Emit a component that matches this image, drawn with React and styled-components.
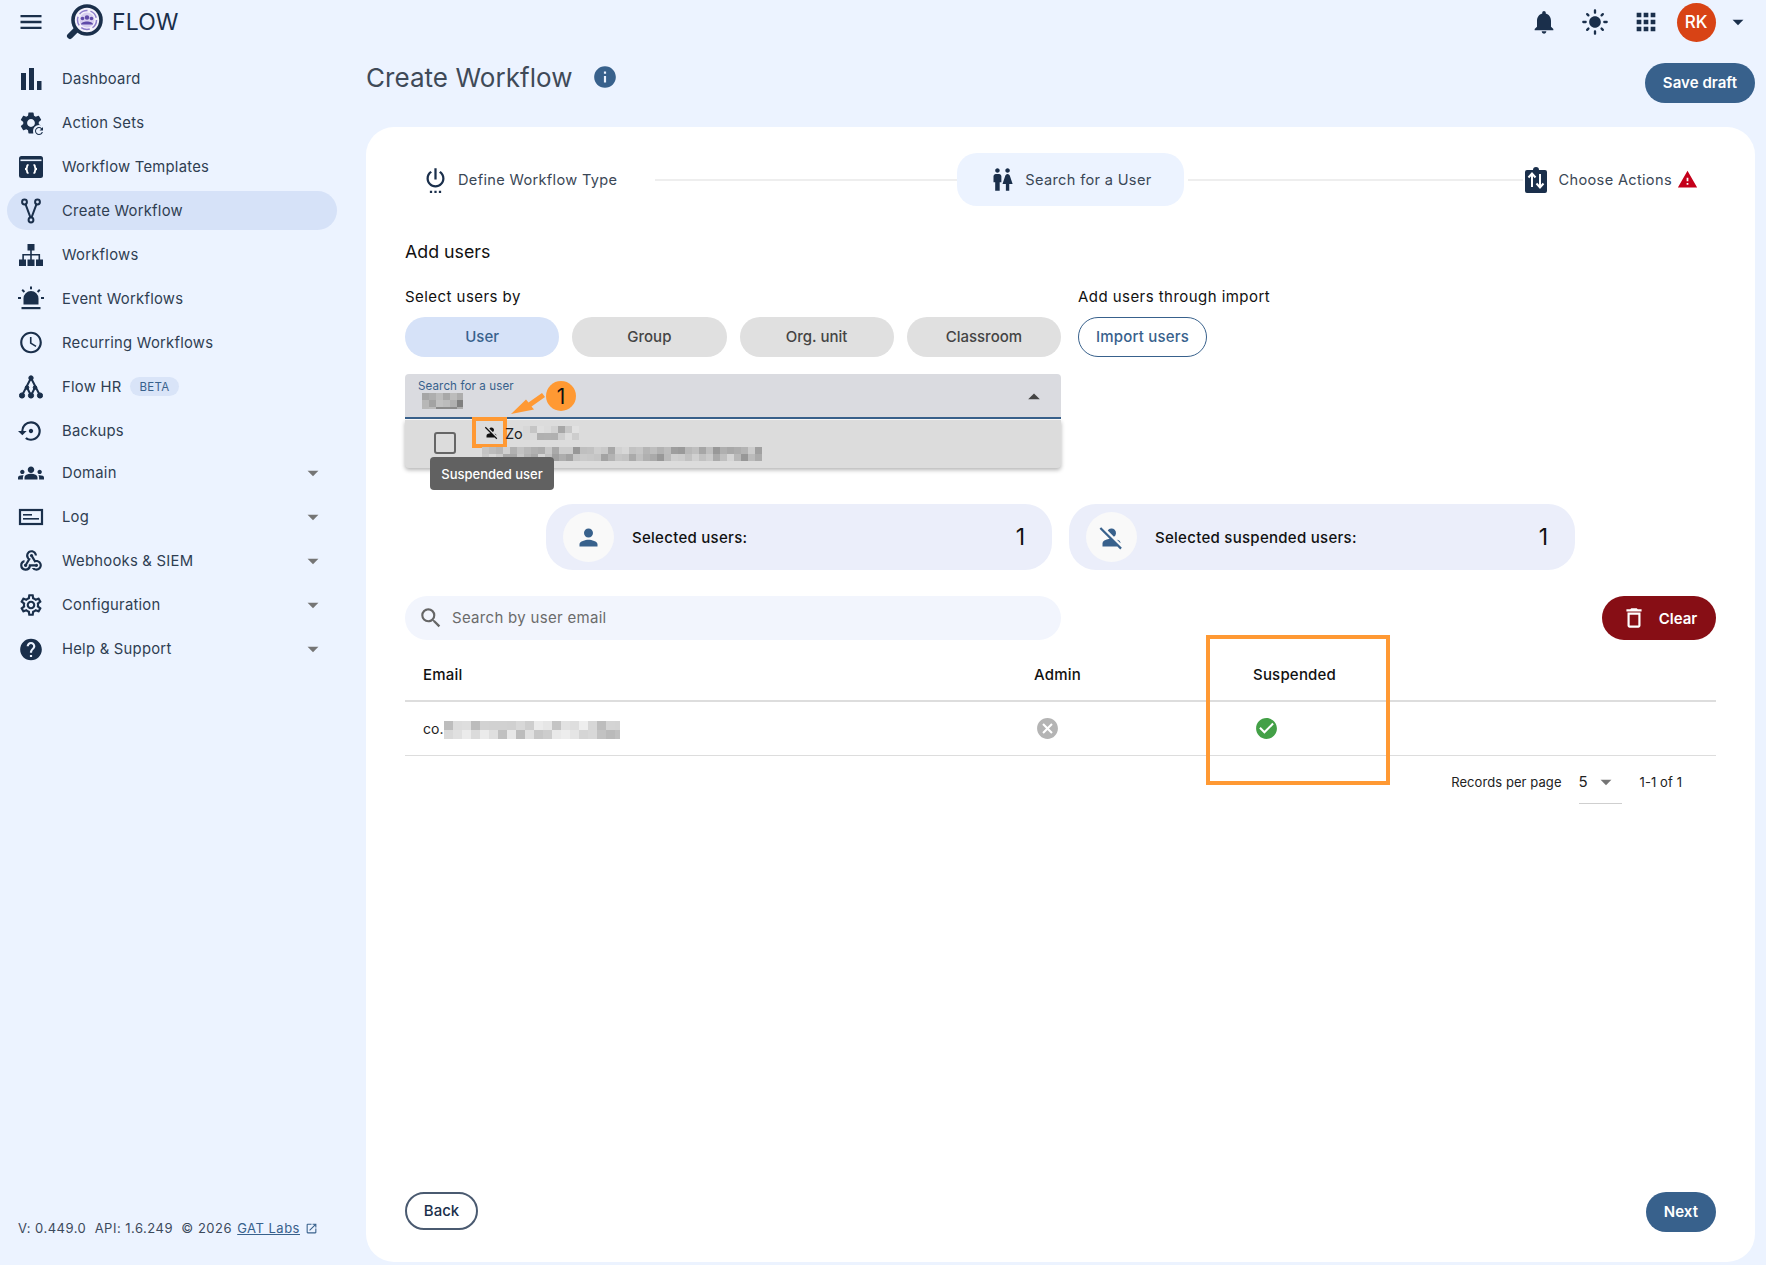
import styled, { createGlobalStyle } from "styled-components";
import {
  MdMenu, MdSettings, MdRefresh, MdOutlineAccessTime, MdSettingsBackupRestore,
  MdGroups, MdOutlineWebhook, MdOutlineSettings, MdHelp, MdArrowDropDown,
  MdArrowDropUp, MdOpenInNew, MdNotifications, MdLightMode, MdApps, MdInfo, MdSettingsPower,
  MdWc, MdWarning, MdPerson, MdPersonOff, MdSearch, MdDeleteOutline, MdCancel, MdCheckCircle,
} from "react-icons/md";

const NAVY = "#1a2f4b";
const BLUE = "#38618c";

const GlobalStyle = createGlobalStyle`
  html, body { margin: 0; padding: 0; }
  body {
    background: #ecf3ff;
    font-family: "Inter", "Liberation Sans", sans-serif;
    color: #2f3e52;
  }
  * { box-sizing: border-box; }
`;

// hand drawn icons, the ones the packages don't have
const LogoIcon = () => (
  <svg width="38" height="38" viewBox="0 0 38 38">
    <line x1="10" y1="27" x2="4" y2="33" stroke={NAVY} strokeWidth="6" strokeLinecap="round" />
    <circle cx="21" cy="17" r="14" fill="#f4f2fb" stroke={NAVY} strokeWidth="3.600" />
    <circle cx="21" cy="17" r="9.500" fill="none" stroke="#8f7fcc" strokeWidth="1.500" strokeDasharray="9 3" />
    <circle cx="21" cy="17" r="7.500" fill="#d8d0f0" />
    <circle cx="21" cy="14.500" r="2.200" fill="#5f4aa8" />
    <circle cx="16.500" cy="15.500" r="1.800" fill="#5f4aa8" />
    <circle cx="25.500" cy="15.500" r="1.800" fill="#5f4aa8" />
    <path d="M15 21.500c0-4 12-4 12 0z" fill="#5f4aa8" />
  </svg>
);

const BarsIcon = () => (
  <svg width="22" height="24" viewBox="0 0 22 24" fill={NAVY}>
    <rect x="1" y="6" width="5" height="17" />
    <rect x="9" y="1" width="5" height="22" />
    <rect x="17" y="14" width="4.500" height="9" />
  </svg>
);

const TemplateIcon = () => (
  <svg width="26" height="26" viewBox="0 0 26 26">
    <rect x="1" y="2" width="24" height="22" rx="2.500" fill={NAVY} />
    <rect x="2.500" y="5.500" width="21" height="1.600" fill="#ecf3ff" />
    <path d="M10.500 11c-1.500 0-1.500 1-1.500 2s-.5 2-2 2c1.500 0 2 1 2 2s0 2 1.500 2M15.500 11c1.500 0 1.500 1 1.500 2s.5 2 2 2c-1.500 0-2 1-2 2s0 2-1.500 2" fill="none" stroke="#fff" strokeWidth="1.800" />
  </svg>
);

const ForkIcon = () => (
  <svg width="24" height="26" viewBox="0 0 24 26" fill="none" stroke={NAVY} strokeWidth="2">
    <circle cx="5.500" cy="4" r="2.400" />
    <circle cx="18.500" cy="4" r="2.400" />
    <circle cx="12" cy="22" r="2.400" />
    <path d="M6.500 6.200L11.500 19.600M17.500 6.200L12.500 19.600" />
  </svg>
);

const SitemapIcon = () => (
  <svg width="26" height="24" viewBox="0 0 26 24" fill={NAVY}>
    <rect x="9.500" y="1" width="7" height="6.500" />
    <rect x="1" y="16.500" width="7" height="6.500" />
    <rect x="9.500" y="16.500" width="7" height="6.500" />
    <rect x="18" y="16.500" width="7" height="6.500" />
    <path d="M12.200 7h1.600v4h8.300v6h-1.600v-4.400h-6.700V17h-1.600v-4.400H5.900V17H4.300v-6h7.900z" />
  </svg>
);

const SirenIcon = () => (
  <svg width="26" height="26" viewBox="0 0 26 26" fill={NAVY}>
    <path d="M5.500 18.500v-6a7.500 7.500 0 0 1 15 0v6z" />
    <rect x="3.500" y="21" width="19" height="2.200" />
    <rect x="12" y="0.500" width="2" height="2.800" />
    <path d="M3.500 4.500l1.400-1.400 2.200 2.200-1.400 1.400zM22.500 4.500l-1.400-1.400-2.200 2.200 1.400 1.400z" />
    <rect x="0" y="11" width="3" height="2" />
    <rect x="23" y="11" width="3" height="2" />
  </svg>
);

const TreeIcon = () => (
  <svg width="24" height="24" viewBox="0 0 24 24" fill={NAVY} stroke={NAVY}>
    <path d="M12 3L3 20.500M12 3l9 17.500M8 12.500l4 8M16 12.500l-4 8" fill="none" strokeWidth="2" />
    <circle cx="12" cy="3" r="2.200" />
    <circle cx="8" cy="12.500" r="1.800" />
    <circle cx="16" cy="12.500" r="1.800" />
    <circle cx="3" cy="20.500" r="2.600" />
    <circle cx="12" cy="20.500" r="2.600" />
    <circle cx="21" cy="20.500" r="2.600" />
  </svg>
);

const LogIcon = () => (
  <svg width="26" height="20" viewBox="0 0 26 20">
    <rect x="2" y="3" width="22" height="14" fill="none" stroke={NAVY} strokeWidth="2.200" />
    <rect x="5" y="7" width="9" height="1.600" fill={NAVY} />
    <rect x="5" y="11" width="16" height="1.600" fill={NAVY} />
  </svg>
);

const ActionsIcon = () => (
  <svg width="22" height="26" viewBox="0 0 22 26">
    <path d="M2 3h6a3 3 0 0 1 6 0h6a2 2 0 0 1 2 2v19a2 2 0 0 1-2 2H2a2 2 0 0 1-2-2V5a2 2 0 0 1 2-2z" fill={NAVY} />
    <path d="M7 20V7M3.500 10.500L7 6.500l3.500 4M15 7v13M11.500 16.500l3.500 4 3.500-4" fill="none" stroke="#fff" strokeWidth="2" />
  </svg>
);

// mosaic over redacted text, shades are stable per cell
const Mosaic = ({ width, height, cell = 7, dark = 170, light = 232, seed = 3 }) => {
  const cells = [];
  const cols = Math.ceil(width / cell);
  const rows = Math.ceil(height / cell);
  for (let r = 0; r < rows; r++) {
    for (let c = 0; c < cols; c++) {
      const n = Math.abs(Math.sin((c + 1) * 12.9898 + (r + seed) * 78.233) * 43758.5453) % 1;
      const v = Math.round(light - (light - dark) * n);
      cells.push(<rect key={`${r}-${c}`} x={c * cell} y={r * cell} width={cell} height={cell} fill={`rgb(${v},${v},${v})`} />);
    }
  }
  return <svg width={width} height={height} style={{ display: "block" }}>{cells}</svg>;
};

const NAV = [
  { label: "Dashboard", icon: <BarsIcon /> },
  { label: "Action Sets", icon: <><MdSettings size={26} /><SmallRefresh><MdRefresh size={12} /></SmallRefresh></> },
  { label: "Workflow Templates", icon: <TemplateIcon /> },
  { label: "Create Workflow", icon: <ForkIcon />, active: true },
  { label: "Workflows", icon: <SitemapIcon /> },
  { label: "Event Workflows", icon: <SirenIcon /> },
  { label: "Recurring Workflows", icon: <MdOutlineAccessTime size={27} /> },
  { label: "Flow HR", icon: <TreeIcon />, beta: true },
  { label: "Backups", icon: <MdSettingsBackupRestore size={28} /> },
  { label: "Domain", icon: <MdGroups size={30} />, more: true, tight: true },
  { label: "Log", icon: <LogIcon />, more: true },
  { label: "Webhooks & SIEM", icon: <MdOutlineWebhook size={26} />, more: true },
  { label: "Configuration", icon: <MdOutlineSettings size={26} />, more: true },
  { label: "Help & Support", icon: <MdHelp size={27} />, more: true },
];

function SmallRefresh({ children }) {
  return <RefreshBadge>{children}</RefreshBadge>;
}

export default function App() {
  return (
    <Page>
      <GlobalStyle />
      <TopBar>
        <Brand>
          <MenuButton><MdMenu size={28} /></MenuButton>
          <LogoIcon />
          <BrandName>FLOW</BrandName>
        </Brand>
        <TopActions>
          <TopIcon><MdNotifications size={28} /></TopIcon>
          <TopIcon><MdLightMode size={28} /></TopIcon>
          <TopIcon $last><MdApps size={28} /></TopIcon>
          <Avatar>RK</Avatar>
          <AccountCaret><MdArrowDropDown size={26} /></AccountCaret>
        </TopActions>
      </TopBar>

      <Body>
        <Sidebar>
          <NavList>
            {NAV.map((item) => (
              <NavItem key={item.label} $active={item.active} $tight={item.tight}>
                <NavIcon>{item.icon}</NavIcon>
                <NavLabel>{item.label}</NavLabel>
                {item.beta && <BetaTag>BETA</BetaTag>}
                {item.more && <NavCaret><MdArrowDropDown size={26} /></NavCaret>}
              </NavItem>
            ))}
          </NavList>
          <Version>
            V: 0.449.0&nbsp; API: 1.6.249&nbsp; © 2026 <VersionLink>GAT Labs</VersionLink>
            <MdOpenInNew size={13} color={BLUE} />
          </Version>
        </Sidebar>

        <Main>
          <TitleRow>
            <TitleGroup>
              <PageTitle>Create Workflow</PageTitle>
              <InfoMark><MdInfo size={26} color={BLUE} /></InfoMark>
            </TitleGroup>
            <PrimaryButton>Save draft</PrimaryButton>
          </TitleRow>

          <Card>
            <Stepper>
              <Step $first>
                <MdSettingsPower size={27} color={NAVY} />
                <StepLabel>Define Workflow Type</StepLabel>
              </Step>
              <Connector $width={302} />
              <Step $active>
                <MdWc size={27} color={NAVY} />
                <StepLabel>Search for a User</StepLabel>
              </Step>
              <Connector $width={335} $gap />
              <Step $last>
                <ActionsIcon />
                <StepLabel>Choose Actions</StepLabel>
                <MdWarning size={21} color="#c4001a" />
              </Step>
            </Stepper>

            <SectionTitle>Add users</SectionTitle>

            <SelectorRow>
              <SelectorCol $grow>
                <FieldLabel>Select users by</FieldLabel>
                <ToggleRow>
                  <TogglePill $active>User</TogglePill>
                  <TogglePill>Group</TogglePill>
                  <TogglePill>Org. unit</TogglePill>
                  <TogglePill>Classroom</TogglePill>
                </ToggleRow>
              </SelectorCol>
              <SelectorCol>
                <FieldLabel>Add users through import</FieldLabel>
                <OutlineButton>Import users</OutlineButton>
              </SelectorCol>
            </SelectorRow>

            <UserField>
              <FieldHint>Search for a user</FieldHint>
              <FieldValue><Mosaic width={41} height={16} cell={7} dark={125} light={195} /></FieldValue>
              <FieldCaret><MdArrowDropUp size={28} /></FieldCaret>

              <CalloutArrow viewBox="0 0 34 21">
                <path d="M0 21L15 6.500l2.500 3L31 0l3 4-13.500 9.500 2.500 3z" fill="#ff9933" />
              </CalloutArrow>
              <CalloutBadge>1</CalloutBadge>

              <Dropdown>
                <Checkbox />
                <OptionText>
                  <OptionName>
                    <SuspendedMark><MdPersonOff size={15} color="#111" /></SuspendedMark>
                    <OptionInitials>Zo</OptionInitials>
                    <Mosaic width={56} height={14} cell={7} dark={165} light={225} seed={4} />
                  </OptionName>
                  <OptionMail><Mosaic width={280} height={14} cell={7} dark={150} light={215} seed={9} /></OptionMail>
                </OptionText>
              </Dropdown>
              <Tooltip>Suspended user</Tooltip>
            </UserField>

            <StatsRow>
              <StatCard>
                <StatAvatar><MdPerson size={27} color={BLUE} /></StatAvatar>
                <StatLabel>Selected users:</StatLabel>
                <StatValue>1</StatValue>
              </StatCard>
              <StatCard>
                <StatAvatar><MdPersonOff size={27} color={BLUE} /></StatAvatar>
                <StatLabel>Selected suspended users:</StatLabel>
                <StatValue>1</StatValue>
              </StatCard>
            </StatsRow>

            <FilterRow>
              <SearchBox>
                <MdSearch size={26} color="#666" />
                <SearchText>Search by user email</SearchText>
              </SearchBox>
              <DangerButton>
                <MdDeleteOutline size={26} />
                Clear
              </DangerButton>
            </FilterRow>

            <Table>
              <HeaderRow>
                <span>Email</span>
                <span>Admin</span>
                <span>Suspended</span>
              </HeaderRow>
              <DataRow>
                <EmailCell>
                  co.
                  <Mosaic width={176} height={18} cell={9} dark={185} light={240} seed={2} />
                </EmailCell>
                <StatusCell><MdCancel size={25} color="#b4b4b4" /></StatusCell>
                <StatusCell><MdCheckCircle size={25} color="#43a047" /></StatusCell>
              </DataRow>
              <Highlight />
            </Table>

            <Pagination>
              <span>Records per page</span>
              <PerPage>
                5
                <MdArrowDropDown size={26} color="#757575" />
              </PerPage>
              <span>1-1 of 1</span>
            </Pagination>

            <CardFooter>
              <BackButton>Back</BackButton>
              <PrimaryButton>Next</PrimaryButton>
            </CardFooter>
          </Card>
        </Main>
      </Body>
    </Page>
  );
}

const Page = styled.div`
  width: 1766px;
  height: 1265px;
  display: flex;
  flex-direction: column;
  overflow: hidden;
`;

const TopBar = styled.header`
  height: 44px;
  flex: none;
  display: flex;
  align-items: center;
  justify-content: space-between;
`;

const Brand = styled.div`
  display: flex;
  align-items: center;
  padding-left: 17px;
`;

const MenuButton = styled.div`
  display: flex;
  color: ${NAVY};
  margin-right: 21px;
`;

const BrandName = styled.div`
  margin-left: 8px;
  font-size: 23px;
  letter-spacing: 0.1px;
  color: ${NAVY};
`;

const TopActions = styled.div`
  display: flex;
  align-items: center;
  padding-right: 15px;
`;

const TopIcon = styled.div`
  display: flex;
  color: ${NAVY};
  margin-right: ${(p) => (p.$last ? "17px" : "23px")};
`;

const Avatar = styled.div`
  width: 39px;
  height: 39px;
  border-radius: 50%;
  background: #d84315;
  color: #fff;
  font-size: 17px;
  font-weight: 500;
  display: flex;
  align-items: center;
  justify-content: center;
`;

const AccountCaret = styled.div`
  display: flex;
  color: ${NAVY};
  margin-left: 9.5px;
`;

const Body = styled.div`
  flex: 1;
  display: flex;
  min-height: 0;
`;

const Sidebar = styled.aside`
  width: 366px;
  flex: none;
  display: flex;
  flex-direction: column;
  padding: 15px 0 29px 7px;
`;

const NavList = styled.nav`
  display: flex;
  flex-direction: column;
  gap: 5px;
`;

const NavItem = styled.div`
  width: 330px;
  height: 39px;
  flex: none;
  display: flex;
  align-items: center;
  padding: 0 11px 0 11px;
  border-radius: 20px;
  background: ${(p) => (p.$active ? "#d6e2f8" : "transparent")};
  margin-top: ${(p) => (p.$tight ? "-1.5px" : "0")};
`;

const NavIcon = styled.div`
  position: relative;
  width: 26px;
  height: 32px;
  flex: none;
  display: flex;
  align-items: center;
  justify-content: center;
  color: ${NAVY};
  margin-right: 18px;
`;

const RefreshBadge = styled.div`
  position: absolute;
  right: -1px;
  bottom: 2px;
  display: flex;
  background: #ecf3ff;
  border-radius: 50%;
`;

const NavLabel = styled.span`
  font-size: 14.8px;
  letter-spacing: 0.25px;
  color: #2f3e52;
`;

const BetaTag = styled.span`
  margin-left: 9px;
  height: 19px;
  padding: 0 9px;
  display: flex;
  align-items: center;
  border-radius: 10px;
  background: #d9e4f8;
  color: ${BLUE};
  font-size: 11.5px;
  letter-spacing: 0.3px;
`;

const NavCaret = styled.div`
  margin-left: auto;
  display: flex;
  color: #757575;
`;

const Version = styled.div`
  margin-top: auto;
  padding-left: 11px;
  display: flex;
  align-items: center;
  white-space: pre-wrap;
  font-size: 13px;
  letter-spacing: 0.5px;
  color: #3c4a5c;
  & > svg { margin-left: 5px; }
`;

const VersionLink = styled.a`
  margin-left: 1px;
  color: ${BLUE};
  text-decoration: underline;
`;

const Main = styled.main`
  flex: 1;
  min-width: 0;
  display: flex;
  flex-direction: column;
  padding-right: 11px;
  padding-bottom: 3px;
`;

const TitleRow = styled.div`
  height: 83px;
  flex: none;
  display: flex;
  justify-content: space-between;
  align-items: flex-start;
  padding-top: 19px;
`;

const TitleGroup = styled.div`
  display: flex;
  align-items: center;
  gap: 19px;
  margin-top: -3px;
`;

const InfoMark = styled.div`
  display: flex;
  margin-top: -2px;
`;

const PageTitle = styled.h1`
  margin: 0;
  font-size: 26px;
  font-weight: 400;
  line-height: 36px;
  letter-spacing: 0.05px;
  color: #3f4a58;
`;

const PrimaryButton = styled.button`
  height: 40px;
  padding: 0 18px 2px;
  border: 0;
  border-radius: 20px;
  background: ${BLUE};
  color: #fff;
  font: 600 15px "Inter", sans-serif;
  letter-spacing: 0.05px;
`;

const Card = styled.section`
  flex: 1;
  min-height: 0;
  display: flex;
  flex-direction: column;
  background: #fff;
  border-radius: 28px;
  padding: 26px 39px 30px 39px;
`;

const Stepper = styled.div`
  height: 53px;
  flex: none;
  display: flex;
  align-items: center;
`;

const Step = styled.div`
  height: 53px;
  display: flex;
  align-items: center;
  gap: 9px;
  border-radius: 20px;
  background: ${(p) => (p.$active ? "#ecf3ff" : "transparent")};
  padding: ${(p) => (p.$first ? "0 38px 0 17px" : p.$last ? "0 0 0 2px" : "0 32px 0 32px")};
  ${(p) => p.$last && "& > span { margin-right: -4px; margin-left: 3px; }"}
`;

const StepLabel = styled.span`
  font-size: 14.6px;
  letter-spacing: 0.32px;
  color: #3a4756;
`;

const Connector = styled.div`
  width: ${(p) => p.$width}px;
  height: 2px;
  flex: none;
  background: #eeeeee;
  margin-left: ${(p) => (p.$gap ? "4px" : "0")};
`;

const SectionTitle = styled.h2`
  margin: 34px 0 0;
  font-size: 17.8px;
  font-weight: 400;
  line-height: 24px;
  color: #111;
`;

const SelectorRow = styled.div`
  margin-top: 23px;
  display: flex;
  gap: 17px;
`;

const SelectorCol = styled.div`
  width: ${(p) => (p.$grow ? "656px" : "auto")};
  display: flex;
  flex-direction: column;
  align-items: flex-start;
  gap: 10px;
`;

const FieldLabel = styled.div`
  font-size: 15px;
  line-height: 20px;
  letter-spacing: 0.45px;
  color: #111;
`;

const ToggleRow = styled.div`
  width: 100%;
  display: flex;
  gap: 13px;
`;

const TogglePill = styled.button`
  flex: 1;
  height: 40px;
  padding: 0 0 2px;
  border: 0;
  border-radius: 20px;
  background: ${(p) => (p.$active ? "#d6e2f8" : "#e0e0e0")};
  color: ${(p) => (p.$active ? BLUE : "#444")};
  font: 500 15px "Inter", sans-serif;
`;

const OutlineButton = styled.button`
  height: 40px;
  padding: 0 17px 2px;
  background: #fff;
  border: 1px solid ${BLUE};
  border-radius: 20px;
  color: ${BLUE};
  font: 500 15px "Inter", sans-serif;
  letter-spacing: 0.2px;
`;

const UserField = styled.div`
  position: relative;
  width: 656px;
  height: 45px;
  flex: none;
  margin-top: 17px;
  background: #dadbe0;
  border-radius: 4px 4px 0 0;
  border-bottom: 2px solid ${BLUE};
  padding: 5px 13px 0;
`;

const FieldHint = styled.div`
  font-size: 11.6px;
  line-height: 14px;
  letter-spacing: 0.1px;
  color: ${BLUE};
`;

const FieldValue = styled.div`
  margin: 0 0 0 4px;
`;

const FieldCaret = styled.div`
  position: absolute;
  right: 13px;
  top: 9px;
  display: flex;
  color: #444;
`;

const CalloutArrow = styled.svg`
  position: absolute;
  left: 106px;
  top: 19px;
  width: 34px;
  height: 21px;
  z-index: 3;
`;

const CalloutBadge = styled.div`
  position: absolute;
  left: 141px;
  top: 7px;
  width: 30px;
  height: 30px;
  border-radius: 50%;
  background: #ff9933;
  color: #111;
  font-size: 21px;
  display: flex;
  align-items: center;
  justify-content: center;
  z-index: 3;
`;

const Dropdown = styled.div`
  position: absolute;
  left: 0;
  right: 0;
  top: 46px;
  height: 48px;
  display: flex;
  align-items: flex-start;
  padding-left: 29px;
  background: #dcdcdc;
  border-radius: 0 0 4px 4px;
  box-shadow: 0 2px 4px rgba(0, 0, 0, 0.3);
  z-index: 1;
`;

const Checkbox = styled.div`
  width: 22px;
  height: 22px;
  margin-top: 12px;
  border: 2px solid #666;
  border-radius: 3px;
`;

const OptionText = styled.div`
  margin-left: 26px;
  display: flex;
  flex-direction: column;
`;

const OptionName = styled.div`
  display: flex;
  align-items: center;
  height: 26px;
  font-size: 14.5px;
  color: #222;
`;

const OptionInitials = styled.span`
  margin-left: -2px;
`;

const SuspendedMark = styled.div`
  width: 35px;
  height: 31px;
  margin: -2px 0 0 -10px;
  padding-left: 4px;
  display: flex;
  align-items: center;
  justify-content: center;
  border: 4px solid #ff9933;
`;

const OptionMail = styled.div`
  margin-top: 1px;
`;

const Tooltip = styled.div`
  position: absolute;
  left: 25px;
  top: 83px;
  width: 124px;
  height: 33px;
  display: flex;
  align-items: center;
  justify-content: center;
  background: #616161;
  border-radius: 4px;
  color: #fff;
  font-size: 13px;
  font-weight: 500;
  z-index: 2;
`;

const StatsRow = styled.div`
  margin-top: 85px;
  display: flex;
  justify-content: center;
  gap: 17px;
`;

const StatCard = styled.div`
  width: 506px;
  height: 66px;
  display: flex;
  align-items: center;
  padding: 0 27px 0 17px;
  border-radius: 27px;
  background: #ebeefa;
`;

const StatAvatar = styled.div`
  width: 51px;
  height: 50px;
  border-radius: 50%;
  background: #f9f9f9;
  display: flex;
  align-items: center;
  justify-content: center;
`;

const StatLabel = styled.span`
  margin-left: 18px;
  font-size: 15px;
  font-weight: 500;
  letter-spacing: 0.28px;
  color: #111;
`;

const StatValue = styled.span`
  margin-left: auto;
  font-size: 23px;
  color: #111;
`;

const FilterRow = styled.div`
  margin-top: 26px;
  display: flex;
  justify-content: space-between;
`;

const SearchBox = styled.div`
  width: 656px;
  height: 44px;
  display: flex;
  align-items: center;
  gap: 8px;
  padding: 0 0 1px 13px;
  border-radius: 22px;
  background: #f2f5fd;
`;

const SearchText = styled.span`
  font-size: 15px;
  letter-spacing: 0.3px;
  color: #6b6b6b;
`;

const DangerButton = styled.button`
  width: 114px;
  height: 44px;
  display: flex;
  align-items: center;
  justify-content: center;
  gap: 12px;
  border: 0;
  border-radius: 22px;
  background: #870e15;
  color: #fff;
  font: 600 15px "Inter", sans-serif;
`;

const Table = styled.div`
  position: relative;
  margin-top: 10px;
`;

const HeaderRow = styled.div`
  height: 52px;
  display: grid;
  grid-template-columns: 611px 219px 1fr;
  align-items: center;
  border-bottom: 2px solid #dddddd;
  font-size: 15px;
  font-weight: 500;
  letter-spacing: 0.2px;
  color: #111;
  & > span { padding: 0 0 2px 18px; }
`;

const DataRow = styled.div`
  height: 54px;
  display: grid;
  grid-template-columns: 611px 219px 1fr;
  align-items: center;
  border-bottom: 1px solid #dddddd;
`;

const EmailCell = styled.div`
  display: flex;
  align-items: center;
  padding-left: 18px;
  font-size: 14px;
  color: #222;
  & > svg { margin: 2px 0 0 1px; }
`;

const StatusCell = styled.div`
  display: flex;
  padding: 0 0 1px 19px;
`;

const Highlight = styled.div`
  position: absolute;
  left: 801px;
  top: -15px;
  width: 184px;
  height: 150px;
  border: 4px solid #ff9933;
`;

const Pagination = styled.div`
  margin-top: 4px;
  height: 44px;
  display: flex;
  align-items: center;
  justify-content: flex-end;
  padding-right: 34px;
  font-size: 13px;
  letter-spacing: 0.08px;
  color: #222;
`;

const PerPage = styled.div`
  width: 43px;
  height: 44px;
  margin: 0 18px 0 17px;
  display: flex;
  align-items: center;
  border-bottom: 1px solid #cfcfcf;
  font-size: 15px;
  padding-left: 0;
  & > svg { margin-left: 5px; }
`;

const CardFooter = styled.div`
  margin-top: auto;
  display: flex;
  align-items: flex-start;
  justify-content: space-between;
`;

const BackButton = styled.button`
  height: 38px;
  width: 73px;
  padding: 0 0 2px;
  border: 2px solid #4a5a70;
  border-radius: 19px;
  background: #fff;
  color: ${NAVY};
  font: 500 15px "Inter", sans-serif;
`;
